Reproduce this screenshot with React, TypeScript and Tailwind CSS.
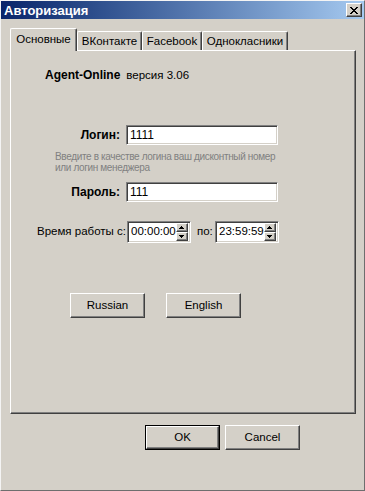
import React from "react";

const raised =
  "bg-[#d4d0c8] border-t border-l border-r border-b border-t-white border-l-white border-r-[#404040] border-b-[#404040] shadow-[inset_-1px_-1px_0_#808080]";
const sunken =
  "bg-white border-t border-l border-r border-b border-t-[#808080] border-l-[#808080] border-r-white border-b-white shadow-[inset_1px_1px_0_#404040,inset_-1px_-1px_0_#d4d0c8]";

function CloseBtn() {
  return (
    <div className={`w-[16px] h-[14px] flex items-center justify-center ${raised}`}>
      <svg width="8" height="7" viewBox="0 0 8 7" shapeRendering="crispEdges">
        <path d="M0 0h2v1h-2zM6 0h2v1h-2zM1 1h2v1h-2zM5 1h2v1h-2zM2 2h4v1h-4zM3 3h2v1h-2zM2 4h4v1h-4zM1 5h2v1h-2zM5 5h2v1h-2zM0 6h2v1h-2zM6 6h2v1h-2z" fill="#000" />
      </svg>
    </div>
  );
}

function Tab({ label, w, active }: { label: string; w: string; active?: boolean }) {
  if (active) {
    return (
      <div
        className={`${w} h-[23px] -mb-px relative z-10 bg-[#d4d0c8] border-t border-l border-r border-t-white border-l-white border-r-[#404040] shadow-[inset_-1px_0_0_#808080] rounded-tl-[2px] rounded-tr-[2px] flex items-center justify-center pb-[1px]`}
      >
        <span className="text-[11.5px] leading-none">{label}</span>
      </div>
    );
  }
  return (
    <div
      className={`${w} h-[19px] bg-[#d4d0c8] border-t border-l border-r border-t-white border-l-white border-r-[#404040] shadow-[inset_-1px_0_0_#808080] rounded-tl-[2px] rounded-tr-[2px] flex items-center justify-center pt-[1px]`}
    >
      <span className="text-[11.5px] leading-none">{label}</span>
    </div>
  );
}

function Spin() {
  return (
    <div className="flex flex-col w-[16px] h-[18px]">
      <div className={`h-[9px] flex items-center justify-center ${raised}`}>
        <svg width="5" height="3" viewBox="0 0 5 3" shapeRendering="crispEdges">
          <path d="M2 0h1v1h-1zM1 1h3v1h-3zM0 2h5v1h-5z" fill="#000" />
        </svg>
      </div>
      <div className={`h-[9px] flex items-center justify-center ${raised}`}>
        <svg width="5" height="3" viewBox="0 0 5 3" shapeRendering="crispEdges">
          <path d="M0 0h5v1h-5zM1 1h3v1h-3zM2 2h1v1h-1z" fill="#000" />
        </svg>
      </div>
    </div>
  );
}

function TimeBox({ value }: { value: string }) {
  return (
    <div className={`w-[64px] h-[22px] flex items-center pl-[2px] pr-[2px] ${sunken}`}>
      <span className="flex-1 text-[11.5px] leading-none pl-[1px]">{value}</span>
      <Spin />
    </div>
  );
}

function Btn({ label, def }: { label: string; def?: boolean }) {
  if (def) {
    return (
      <div className="w-[75px] h-[25px] border border-black">
        <div className={`w-full h-full flex items-center justify-center ${raised}`}>
          <span className="text-[11.5px] leading-none">{label}</span>
        </div>
      </div>
    );
  }
  return (
    <div className={`w-[75px] h-[25px] flex items-center justify-center ${raised}`}>
      <span className="text-[11.5px] leading-none">{label}</span>
    </div>
  );
}

export default function App() {
  return (
    <div className="w-[365px] h-[491px] bg-[#d4d0c8] border border-t-[#f4f4f4] border-l-[#f4f4f4] border-r-[#6e6e6e] border-b-[#6e6e6e] flex flex-col text-black font-['Liberation_Sans',Arial,sans-serif] select-none overflow-hidden">
      <div className="h-[18px] flex items-center justify-between pl-[3px] pr-[2px] bg-linear-to-r from-[#0a246a] to-[#a6caf0]">
        <span className="text-white font-bold text-[13px] leading-none">Авторизация</span>
        <CloseBtn />
      </div>

      <div className="pl-[9px] pt-[9px] flex items-end">
        <Tab label="Основные" w="w-[67px]" active />
        <Tab label="ВКонтакте" w="w-[65px]" />
        <Tab label="Facebook" w="w-[60px]" />
        <Tab label="Однокласники" w="w-[86px]" />
      </div>

      <div className="ml-[9px] w-[346px] h-[364px] border-t border-l border-r border-b border-t-white border-l-white border-r-[#404040] border-b-[#404040] shadow-[inset_-1px_-1px_0_#808080] flex flex-col">
        <div className="pl-[34px] mt-[18px] flex items-baseline gap-[6px]">
          <span className="font-bold text-[12px] leading-[13px]">Agent-Online</span>
          <span className="text-[11.5px] leading-[13px]">версия 3.06</span>
        </div>

        <div className="mt-[43px] flex items-center">
          <span className="w-[109px] text-right font-bold text-[12px] leading-none">Логин:</span>
          <div className={`ml-[6px] w-[152px] h-[20px] flex items-center pl-[3px] ${sunken}`}>
            <span className="text-[12px] leading-none">1111</span>
          </div>
        </div>

        <div className="pl-[44px] mt-[6px] text-[10px] leading-[11px] tracking-[-0.35px] text-[#808080]">
          <div>Введите в качестве логина ваш дисконтный номер</div>
          <div>или логин менеджера</div>
        </div>

        <div className="mt-[9px] flex items-center">
          <span className="w-[109px] text-right font-bold text-[12px] leading-none">Пароль:</span>
          <div className={`ml-[6px] w-[152px] h-[20px] flex items-center pl-[3px] ${sunken}`}>
            <span className="text-[12px] leading-none">111</span>
          </div>
        </div>

        <div className="mt-[19px] pl-[26px] flex items-center">
          <span className="w-[90px] text-[11.5px] leading-none whitespace-nowrap">Время работы с:</span>
          <TimeBox value="00:00:00" />
          <span className="ml-[6px] w-[18px] text-[11.5px] leading-none">по:</span>
          <TimeBox value="23:59:59" />
        </div>

        <div className="mt-[50px] pl-[59px] flex gap-[21px]">
          <Btn label="Russian" />
          <Btn label="English" />
        </div>
      </div>

      <div className="mt-[11px] pl-[144px] flex gap-[5px]">
        <Btn label="OK" def />
        <Btn label="Cancel" />
      </div>
    </div>
  );
}
